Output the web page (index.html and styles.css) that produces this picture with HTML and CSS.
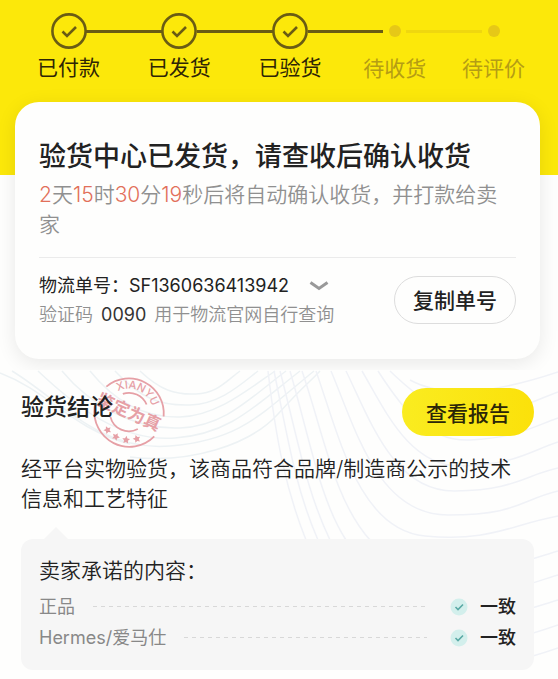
FILE: index.html
```html
<!DOCTYPE html>
<html lang="zh-CN">
  <head>
    <meta charset="UTF-8" />
    <meta name="viewport" content="width=device-width, initial-scale=1.0" />
    <title>验货详情</title>
    <link rel="stylesheet" href="styles.css">
  </head>
  <body>
    <header class="progress">
      <div class="steps">
        <div class="step">
          <svg class="step-icon" viewBox="0 0 36 36"><circle cx="18" cy="18" r="16.6" /><path d="M11.5 18.5l4.5 4.5 9-9" /></svg>
          <span>已付款</span>
        </div>
        <div class="step-line"></div>
        <div class="step">
          <svg class="step-icon" viewBox="0 0 36 36"><circle cx="18" cy="18" r="16.6" /><path d="M11.5 18.5l4.5 4.5 9-9" /></svg>
          <span>已发货</span>
        </div>
        <div class="step-line"></div>
        <div class="step">
          <svg class="step-icon" viewBox="0 0 36 36"><circle cx="18" cy="18" r="16.6" /><path d="M11.5 18.5l4.5 4.5 9-9" /></svg>
          <span>已验货</span>
        </div>
        <div class="step-line to-dot"></div>
        <div class="step pending">
          <svg class="step-icon" viewBox="0 0 36 36"><circle cx="18" cy="18" r="6" /></svg>
          <span>待收货</span>
        </div>
        <div class="step-line from-dot to-dot"></div>
        <div class="step pending">
          <svg class="step-icon" viewBox="0 0 36 36"><circle cx="18" cy="18" r="6" /></svg>
          <span>待评价</span>
        </div>
      </div>
    </header>

    <section class="card">
      <h1>验货中心已发货，请查收后确认收货</h1>
      <p class="countdown"><b>2</b>天<b>15</b>时<b>30</b>分<b>19</b>秒后将自动确认收货，并打款给卖家</p>
      <div class="tracking">
        <div class="tracking-info">
          <div class="tracking-no">
            <span>物流单号：SF1360636413942</span>
            <button class="toggle" aria-label="展开物流">
              <svg width="20" height="10" viewBox="0 0 20 10"><path d="M1.5 1.5L10 7.5l8.5-6" /></svg>
            </button>
          </div>
          <p class="code">验证码 <b>0090</b> 用于物流官网自行查询</p>
        </div>
        <button class="copy-btn">复制单号</button>
      </div>
    </section>

    <section class="result">
      <svg class="waves" viewBox="0 0 558 309" preserveAspectRatio="xMidYMin slice" aria-hidden="true">
        <g class="waves-left">
          <path d="M0 3C50 22 70 58 130 74" />
          <path d="M12 1C60 30 100 82 170 76S260 45 314 1" />
          <path d="M38 1C75 36 120 72 175 68S255 36 300 1" />
          <path d="M62 1C90 35 135 60 180 58S250 28 286 1" />
          <path d="M90 1C115 32 145 48 180 47S245 22 275 1" />
          <path d="M115 1C140 28 160 36 190 35S240 15 258 1" />
          <path d="M140 1C160 20 175 25 196 24S225 12 240 1" />
          <path d="M130 87C190 94 250 75 278 44S308 14 320 1" />
        </g>
        <g class="waves-right">
          <path d="M268 1C276 70 286 120 306 170" />
          <path d="M274 1C288 70 296 120 318 170" />
          <path d="M280 1C298 70 306 120 330 170" />
          <path d="M290 1C310 70 320 130 346 170" />
          <path d="M302 1C324 65 334 130 370 170" />
          <path d="M316 1C340 70 360 160 425 166S510 155 558 146" />
          <path d="M331 1C356 60 378 145 448 145S520 130 558 121" />
          <path d="M346 1C370 50 394 122 455 121S525 105 558 98" />
          <path d="M362 1C385 40 410 98 463 96S528 82 558 72" />
          <path d="M378 1C400 35 425 72 470 70S530 58 558 48" />
          <path d="M390 1C415 25 440 47 480 44S535 30 558 22" />
          <path d="M410 10C450 32 510 18 558 2" />
          <path d="M480 202C510 197 535 188 558 181" />
          <path d="M480 228C510 221 535 212 558 205" />
          <path d="M480 251C510 246 535 237 558 230" />
          <path d="M480 276C510 271 535 263 558 255" />
          <path d="M480 297C510 294 535 286 558 278" />
        </g>
      </svg>

      <div class="result-head">
        <h2>
          验货结论
          <svg class="stamp" viewBox="0 0 76 76" aria-hidden="true">
            <g transform="rotate(24 38 38)">
              <path class="ring" d="M7 24A35 35 0 0 1 71.500 28M71 50A35 35 0 0 1 4.500 47" />
              <path class="ring" d="M25 24A19 19 0 0 1 51 24M53 50A19 19 0 0 1 23 50" />
              <path id="stampArc" fill="none" d="M14.500 38A23.500 23.500 0 0 1 61.500 38" />
              <text class="stamp-name"><textPath href="#stampArc" startOffset="50%">XIANYU</textPath></text>
              <text class="stamp-text" x="38" y="44">鉴定为真</text>
              <g class="stars">
                <path id="star" d="M38 62l1.200 2.400 2.700.4-2 1.900.5 2.700-2.400-1.300-2.400 1.300.5-2.700-2-1.900 2.700-.4z" transform="rotate(-18 38 38)" />
                <use href="#star" transform="rotate(22 38 38)" />
                <use href="#star" transform="rotate(44 38 38)" />
                <use href="#star" transform="rotate(-22 38 38)" />
              </g>
            </g>
          </svg>
        </h2>
        <button class="report-btn">查看报告</button>
      </div>
      <p class="summary">经平台实物验货，该商品符合品牌/制造商公示的技术信息和工艺特征</p>

      <div class="promise">
        <h3>卖家承诺的内容：</h3>
        <ul>
          <li>
            <span class="name">正品</span>
            <span class="dash"></span>
            <svg class="ok" viewBox="0 0 18 18"><circle cx="9" cy="9" r="8.500" /><path d="M5.500 9l2.500 2.500 5-5" /></svg>
            <span class="same">一致</span>
          </li>
          <li>
            <span class="name">Hermes/爱马仕</span>
            <span class="dash"></span>
            <svg class="ok" viewBox="0 0 18 18"><circle cx="9" cy="9" r="8.500" /><path d="M5.500 9l2.500 2.500 5-5" /></svg>
            <span class="same">一致</span>
          </li>
        </ul>
      </div>
    </section>
  </body>
</html>
```
FILE: styles.css
```css
* {
  box-sizing: border-box;
}

body {
  font-family: Inter, "Noto Sans CJK SC", sans-serif;
  background-color: #fefefd;
  color: #222;
  margin: 0;
}

h1,
h2,
h3,
p,
ul {
  margin: 0;
  padding: 0;
  font-weight: 400;
}

button {
  font-family: inherit;
  cursor: pointer;
}

.progress {
  background-color: #fce80a;
  padding: 13px 33px 91px 37px;
}

.steps {
  display: flex;
}

.step {
  width: 63px;
  display: flex;
  flex-direction: column;
  align-items: center;
  font-size: 21px;
  line-height: 30px;
  white-space: nowrap;
  color: #2e2505;
}

.step-icon {
  width: 36px;
  height: 36px;
  margin-bottom: 4px;
  fill: none;
  stroke: #6a5c14;
  stroke-width: 2.6;
}

.pending {
  color: #b59d14;
}

.pending .step-icon {
  margin-bottom: 5px;
  fill: #e6c817;
  stroke: none;
}

.step-line {
  flex: 1;
  height: 3px;
  margin: 17px -14px 0;
  background-color: #6a5c14;
}

.step-line.to-dot {
  margin-right: -20px;
}

.step-line.from-dot {
  margin-left: -20px;
  background-color: #efd70f;
}

.card {
  position: relative;
  margin: -73px 18px 0 15px;
  padding: 36px 24px 30px;
  background-color: #fefefd;
  border-radius: 24px;
  box-shadow: 0 4px 20px rgba(0, 0, 0, 0.09);
}

.card h1 {
  font-size: 27px;
  line-height: 38px;
  font-weight: 500;
  white-space: nowrap;
}

.countdown {
  margin-top: 4px;
  font-size: 21px;
  line-height: 30px;
  font-weight: 350;
  color: #909090;
}

.countdown b {
  font-weight: 350;
  color: #e2705a;
}

.tracking {
  display: flex;
  justify-content: space-between;
  align-items: center;
  margin-top: 17px;
  padding-top: 13px;
  border-top: 1px solid #ebebeb;
}

.tracking-info {
  font-size: 18px;
  line-height: 29px;
  white-space: nowrap;
}

.tracking-no {
  display: flex;
  align-items: center;
  gap: 20px;
}

.toggle {
  display: flex;
  padding: 0;
  border: none;
  background: none;
}

.toggle svg {
  fill: none;
  stroke: #999;
  stroke-width: 3;
}

.code {
  color: #909090;
  font-weight: 350;
}

.code b {
  margin: 0 3px;
  font-weight: 400;
  color: #333;
}

.copy-btn {
  height: 48px;
  padding: 0 18px 2px;
  border: 1px solid #ddd;
  border-radius: 24px;
  background-color: #fefefd;
  color: #222;
  font-size: 21px;
  font-weight: 500;
}

.result {
  position: relative;
  z-index: 0;
  margin-top: 11px;
  padding: 18px 24px 9px 21px;
  background-color: #fefefd;
}

.waves {
  position: absolute;
  top: 0;
  left: 0;
  z-index: -1;
  width: 100%;
  height: 100%;
  fill: none;
  stroke-width: 1.5;
}

.waves-left {
  stroke: #edf2f4;
}

.waves-right {
  stroke: #f0f2f7;
}

.result-head {
  display: flex;
  justify-content: space-between;
  align-items: flex-start;
}

.result-head h2 {
  position: relative;
  z-index: 0;
  font-size: 23px;
  line-height: 38px;
  font-weight: 500;
}

.stamp {
  position: absolute;
  top: -14px;
  right: -54px;
  z-index: -1;
  width: 76px;
  height: 76px;
  fill: #e6a0a6;
}

.ring {
  fill: none;
  stroke: #e6a0a6;
  stroke-width: 1.8;
}

.stamp-name {
  font-size: 11px;
  text-anchor: middle;
}

.stamp-text {
  font-size: 17px;
  font-weight: 700;
  text-anchor: middle;
}

.report-btn {
  height: 48px;
  padding: 0 24px;
  border: none;
  border-radius: 24px;
  background: linear-gradient(90deg, #faec20, #fbe10a);
  color: #2b2607;
  font-size: 21px;
  font-weight: 500;
}

.summary {
  margin-top: 18px;
  padding-right: 12px;
  font-size: 21px;
  line-height: 30px;
  font-weight: 350;
}

.promise {
  position: relative;
  margin-top: 25px;
  padding: 17px 18px;
  background-color: #f6f6f6;
  border-radius: 12px;
}

.promise::before {
  content: "";
  position: absolute;
  left: 23px;
  bottom: 100%;
  border: 12px solid transparent;
  border-top: none;
  border-bottom-color: #f6f6f6;
}

.promise h3 {
  font-size: 21px;
  line-height: 30px;
  font-weight: 350;
}

.promise ul {
  margin-top: 5px;
  list-style: none;
}

.promise li {
  display: flex;
  align-items: center;
  font-size: 18px;
  line-height: 31px;
}

.name {
  color: #888;
}

.dash {
  flex: 1;
  height: 1px;
  margin: 0 23px 0 18px;
  background: repeating-linear-gradient(90deg, #d8d8d8 0 4px, transparent 4px 8px);
}

.ok {
  width: 18px;
  height: 18px;
  margin-right: 12px;
  fill: #d3efec;
}

.ok path {
  fill: none;
  stroke: #5aa9a5;
  stroke-width: 1.6;
}

.same {
  font-weight: 500;
}
```
